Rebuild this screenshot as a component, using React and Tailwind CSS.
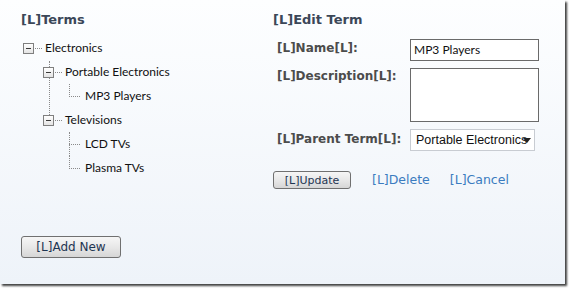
import React from "react";

const dv = { fontFamily: '"DejaVu Sans", Verdana, sans-serif' };
const lato = { fontFamily: 'Lato, "Open Sans", sans-serif' };

function Box() {
  return (
    <span className="relative z-10 flex h-[11px] w-[11px] shrink-0 items-center justify-center border border-[#7f7f7f] bg-gradient-to-b from-white to-[#e4e4e4]">
      <span className="h-px w-[5px] bg-[#3a3a3a]" />
    </span>
  );
}

function ParentRow({ label }) {
  return (
    <div className="flex h-[24px] items-center">
      <Box />
      <span className="ml-[1px] w-[7px] border-t border-dotted border-[#8a8a8a]" />
      <span className="ml-[3px] text-[12px] text-[#111]" style={lato}>{label}</span>
    </div>
  );
}

function LeafRow({ label, last }) {
  return (
    <div className="flex h-[24px] items-center pl-[46px]">
      <span className="relative h-full w-[11px] shrink-0">
        <span
          className={
            "absolute left-0 top-0 border-l border-dotted border-[#8a8a8a] " +
            (last ? "h-[13px]" : "h-full")
          }
        />
        <span className="absolute left-0 top-[12px] w-full border-t border-dotted border-[#8a8a8a]" />
      </span>
      <span className="ml-[5px] text-[12px] text-[#111]" style={lato}>{label}</span>
    </div>
  );
}

function Btn({ children, className }) {
  return (
    <button
      className={
        "rounded-[3px] border border-[#707070] bg-gradient-to-b from-[#f6f6f6] via-[#e8e8e8] to-[#d6d6d6] text-[#1e3552] " +
        className
      }
      style={dv}
    >
      {children}
    </button>
  );
}

export default function App() {
  return (
    <div className="h-[289px] w-[569px] bg-white">
      <div className="flex h-[284px] w-[565px] bg-gradient-to-b from-[#fdfeff] to-[#eef3f9] shadow-[2px_2px_2px_rgba(0,0,0,0.75)]">
        {/* left column */}
        <div className="flex w-[273px] flex-col pl-[21px] pt-[11px] pb-[26px]">
          <div className="text-[13px] font-bold leading-[18px] text-[#3b4758]" style={dv}>[L]Terms</div>
          <div className="mt-[7px] pl-[2px]">
            <ParentRow label="Electronics" />
            <div className="relative pl-[20px]">
              <span className="absolute left-[26px] top-[1px] h-[56px] border-l border-dotted border-[#8a8a8a]" />
              <ParentRow label="Portable Electronics" />
              <div className="-ml-[20px]">
                <LeafRow label="MP3 Players" last />
              </div>
              <ParentRow label="Televisions" />
              <div className="-ml-[20px]">
                <LeafRow label="LCD TVs" />
                <LeafRow label="Plasma TVs" last />
              </div>
            </div>
          </div>
          <Btn className="mt-auto h-[22px] w-[100px] text-[12px] leading-none">[L]Add New</Btn>
        </div>

        {/* right column */}
        <div className="flex flex-col pt-[11px]">
          <div className="text-[13px] font-bold leading-[18px] text-[#3b4758]" style={dv}>[L]Edit Term</div>
          <div className="mt-[10px] grid grid-cols-[133px_auto] gap-y-[7px] pl-[4px] text-[12px] font-bold leading-[16px] text-[#4c4c4c]" style={dv}>
            <div className="pt-[1px]">[L]Name[L]:</div>
            <div className="flex h-[22px] w-[129px] items-center border border-[#6a6a6a] bg-white pl-[3px] text-[12px] font-normal text-[#111]" style={lato}>
              MP3 Players
            </div>
            <div className="pt-[0px]">[L]Description[L]:</div>
            <div className="h-[54px] w-[129px] border border-[#6a6a6a] bg-white" />
            <div className="pt-[2px]">[L]Parent Term[L]:</div>
            <div className="relative flex h-[22px] w-[125px] items-center overflow-hidden border border-[#c8ccd2] bg-white pl-[5px] font-normal text-[#111]" style={{ fontFamily: '"Liberation Sans", Arial, sans-serif', fontSize: "12.5px" }}>
              <span className="whitespace-nowrap">Portable Electronics</span>
              <span className="absolute right-[3px] top-0 flex h-full items-center">
                <span className="h-0 w-0 border-x-[4px] border-t-[5px] border-x-transparent border-t-[#222]" />
              </span>
            </div>
          </div>
          <div className="mt-[20px] flex items-center text-[12.5px]" style={dv}>
            <Btn className="h-[18px] w-[78px] text-[11px] leading-none">[L]Update</Btn>
            <span className="ml-[21px] text-[#3b7cc0]">[L]Delete</span>
            <span className="ml-[20px] text-[#3b7cc0]">[L]Cancel</span>
          </div>
        </div>
      </div>
    </div>
  );
}
